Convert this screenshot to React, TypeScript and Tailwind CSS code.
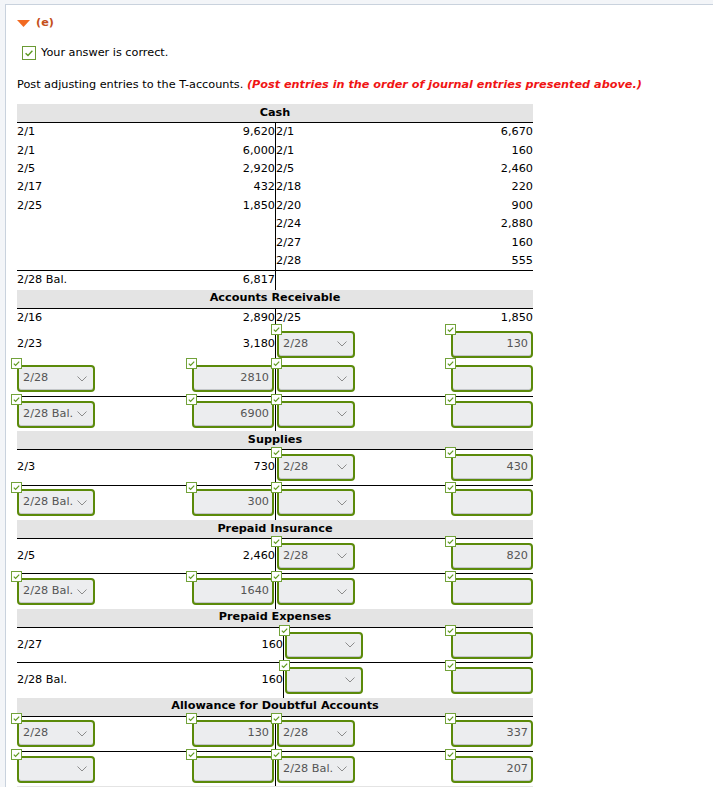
import React from "react";

type Item = string | { sel: string } | { inp: string } | null;
type Row = { c: [Item, Item, Item, Item]; k: "t" | "i" | "m"; line?: boolean };

function Badge() {
  return (
    <span className="absolute left-[-6px] top-[-7px] z-10 w-[11px] h-[11px] bg-white border border-[#72a23a] flex items-center justify-center">
      <svg width="9" height="9" viewBox="0 0 9 9">
        <path d="M1.8 4.6 L3.6 6.4 L7.2 2.6" fill="none" stroke="#5f9a1f" strokeWidth="1.2" />
      </svg>
    </span>
  );
}

function Sel({ v, right }: { v: string; right?: boolean }) {
  return (
    <div className={`relative w-[78px] h-[27px] ${right ? "ml-[1px]" : ""}`}>
      <Badge />
      <div className="w-full h-full rounded-[4px] border-2 border-[#5b8a0a] bg-[#ecedef] shadow-[inset_0_-1px_0_#c3c6c9] flex items-center justify-between pl-[4px] pr-[6px] text-[#555]">
        <span className="whitespace-nowrap">{v}</span>
        <svg width="10" height="6" viewBox="0 0 10 6" className="shrink-0">
          <path d="M0.5 0.5 L5 5 L9.5 0.5" fill="none" stroke="#8c8c8c" strokeWidth="1" />
        </svg>
      </div>
    </div>
  );
}

function Inp({ v, left }: { v: string; left?: boolean }) {
  return (
    <div className={`relative w-[82px] h-[27px] ${left ? "mr-[1px]" : ""}`}>
      <Badge />
      <div className="w-full h-full rounded-[4px] border-2 border-[#5b8a0a] bg-[#ecedef] shadow-[inset_0_-1px_0_#c3c6c9] flex items-center justify-end pr-[3px] text-[#555]">
        <span>{v}</span>
      </div>
    </div>
  );
}

function Cell({ it, side, pos }: { it: Item; side: "l" | "r"; pos: 0 | 1 }) {
  if (it === null) return <span />;
  if (typeof it === "string") return <span className="whitespace-nowrap leading-[18px]">{it}</span>;
  if ("sel" in it) return <Sel v={it.sel} right={side === "r"} />;
  return <Inp v={it.inp} left={side === "l" && pos === 1} />;
}

function TAccount({ title, rows, wide, noTitle }: { title: string; rows: Row[]; wide?: boolean; noTitle?: boolean }) {
  return (
    <div className="w-[516px]">
      <div className="h-[19px] bg-[#e4e4e4] border-b border-black flex items-center justify-center font-bold">
        {noTitle ? "" : title}
      </div>
      {rows.map((r, i) => (
        <React.Fragment key={i}>
          {r.line && <div className="h-px bg-black" />}
          <div className={`flex ${r.k === "t" ? "h-[18.4px]" : r.k === "m" ? "h-[34.6px]" : "h-[34.4px]"}`}>
            <div className={`${wide ? "w-[267px]" : "w-[259px]"} shrink-0 border-r border-black flex items-center justify-between`}>
              <Cell it={r.c[0]} side="l" pos={0} />
              <Cell it={r.c[1]} side="l" pos={1} />
            </div>
            <div className="flex-1 flex items-center justify-between">
              <Cell it={r.c[2]} side="r" pos={0} />
              <Cell it={r.c[3]} side="r" pos={1} />
            </div>
          </div>
        </React.Fragment>
      ))}
    </div>
  );
}

const E = { sel: "" };
const EI = { inp: "" };

export default function App() {
  const cash: Row[] = [
    { c: ["2/1", "9,620", "2/1", "6,670"], k: "t" },
    { c: ["2/1", "6,000", "2/1", "160"], k: "t" },
    { c: ["2/5", "2,920", "2/5", "2,460"], k: "t" },
    { c: ["2/17", "432", "2/18", "220"], k: "t" },
    { c: ["2/25", "1,850", "2/20", "900"], k: "t" },
    { c: [null, null, "2/24", "2,880"], k: "t" },
    { c: [null, null, "2/27", "160"], k: "t" },
    { c: [null, null, "2/28", "555"], k: "t" },
    { c: ["2/28 Bal.", "6,817", null, null], k: "t", line: true },
  ];
  const ar: Row[] = [
    { c: ["2/16", "2,890", "2/25", "1,850"], k: "t" },
    { c: ["2/23", "3,180", { sel: "2/28" }, { inp: "130" }], k: "m" },
    { c: [{ sel: "2/28" }, { inp: "2810" }, E, EI], k: "i" },
    { c: [{ sel: "2/28 Bal." }, { inp: "6900" }, E, EI], k: "i", line: true },
  ];
  const sup: Row[] = [
    { c: ["2/3", "730", { sel: "2/28" }, { inp: "430" }], k: "i" },
    { c: [{ sel: "2/28 Bal." }, { inp: "300" }, E, EI], k: "i", line: true },
  ];
  const pi: Row[] = [
    { c: ["2/5", "2,460", { sel: "2/28" }, { inp: "820" }], k: "i" },
    { c: [{ sel: "2/28 Bal." }, { inp: "1640" }, E, EI], k: "i", line: true },
  ];
  const pe: Row[] = [
    { c: ["2/27", "160", E, EI], k: "i" },
    { c: ["2/28 Bal.", "160", E, EI], k: "i", line: true },
  ];
  const afda: Row[] = [
    { c: [{ sel: "2/28" }, { inp: "130" }, { sel: "2/28" }, { inp: "337" }], k: "i" },
    { c: [E, EI, { sel: "2/28 Bal." }, { inp: "207" }], k: "i", line: true },
  ];

  return (
    <div className="min-h-screen bg-[#f3f5f8] pt-[4px] pl-[5px] font-['DejaVu_Sans',Verdana,sans-serif] text-[11.25px] text-black">
      <div className="bg-white border-l border-t border-[#c9d2dd] pl-[11px] pt-[9px] pb-[40px] min-h-[800px]">
        <div className="h-[18px] flex items-center">
          <svg width="13" height="7" viewBox="0 0 13 7">
            <polygon points="0,0 13,0 6.5,7" fill="#f26a21" />
          </svg>
          <span className="ml-[6px] font-bold text-[#c4501c]">(e)</span>
        </div>
        <div className="mt-[14px] ml-[5px] h-[14px] flex items-center">
          <span className="w-[14px] h-[14px] border border-[#6b9a34] bg-white flex items-center justify-center">
            <svg width="12" height="12" viewBox="0 0 12 12">
              <path d="M2.6 6.2 L5 8.5 L9.4 3.8" fill="none" stroke="#5d9a22" strokeWidth="1.4" />
            </svg>
          </span>
          <span className="ml-[5px]">Your answer is correct.</span>
        </div>
        <div className="mt-[16px] h-[18px] leading-[18px] whitespace-nowrap">
          Post adjusting entries to the T-accounts.{" "}
          <span className="font-bold italic text-[#f01414]">
            (Post entries in the order of journal entries presented above.)
          </span>
        </div>
        <div className="mt-[10px]">
          <TAccount title="Cash" rows={cash} />
          <TAccount title="Accounts Receivable" rows={ar} />
          <TAccount title="Supplies" rows={sup} />
          <TAccount title="Prepaid Insurance" rows={pi} />
          <TAccount title="Prepaid Expenses" rows={pe} wide />
          <TAccount title="Allowance for Doubtful Accounts" rows={afda} />
          <TAccount title="" rows={[]} noTitle />
        </div>
      </div>
    </div>
  );
}
